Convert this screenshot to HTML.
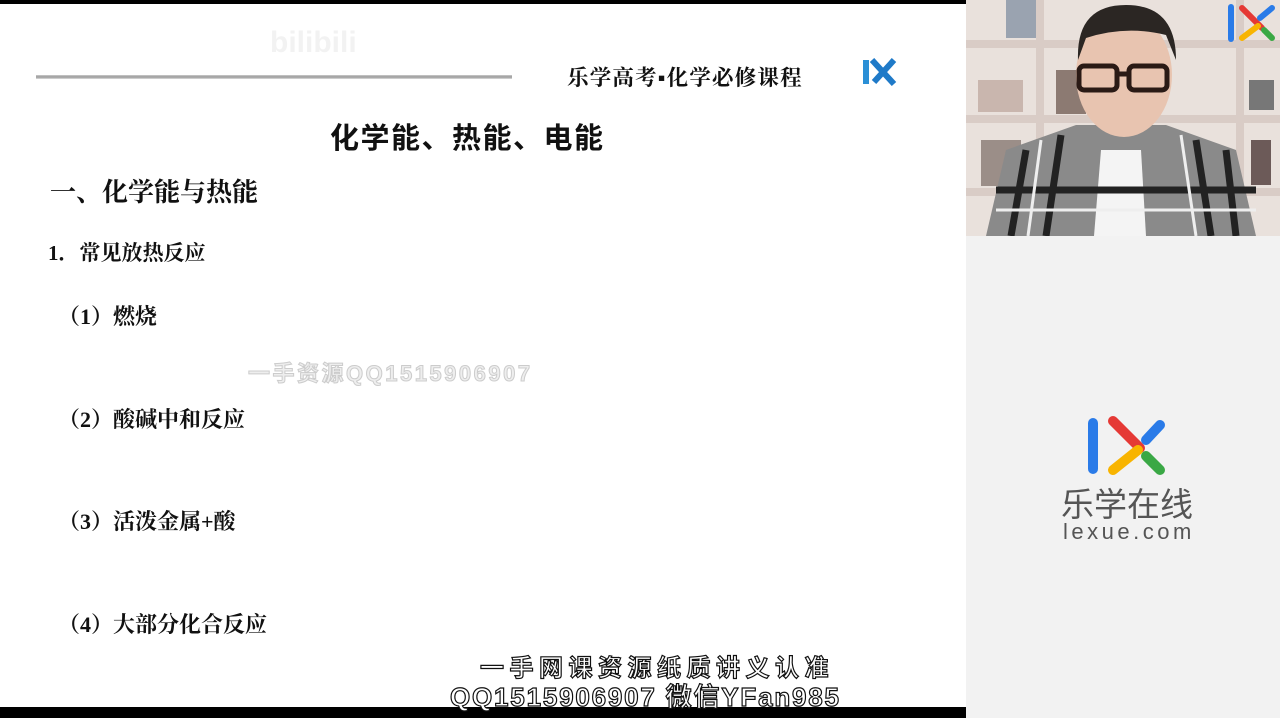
<!DOCTYPE html>
<html><head><meta charset="utf-8"><style>
*{margin:0;padding:0;box-sizing:border-box}
body{width:1280px;height:718px;overflow:hidden;background:#fff;position:relative;font-family:"Liberation Serif","Noto Serif CJK SC",serif;color:#111}
.a{position:absolute;white-space:nowrap;line-height:1}
.b{font-weight:bold}
</style></head><body>
<div class="a" style="left:0;top:0;width:966px;height:4px;background:#000"></div>
<div class="a" style="left:0;top:707px;width:966px;height:11px;background:#000"></div>
<div class="a" style="left:36px;top:75px;width:476px;height:4px;background:linear-gradient(#ccc,#999,#ddd)"></div>
<div class="a" style="left:270px;top:26px;font:bold 30px 'Liberation Sans',sans-serif;color:#f2f2f2">bilibili</div>
<div class="a b" style="left:567px;top:68px;font-size:21.5px;letter-spacing:1.2px">乐学高考▪化学必修课程</div>
<svg class="a" style="left:860px;top:58px" width="40" height="28" viewBox="0 0 40 28"><rect x="3" y="2" width="6" height="24" fill="#2a8fd6"/><path d="M12 2 L34 26 M34 2 L14 24" stroke="#1f7ac8" stroke-width="6"/></svg>
<div class="a b" style="left:330px;top:125px;font-family:'Liberation Sans','Noto Sans CJK SC',sans-serif;font-size:29px;letter-spacing:1.5px">化学能、热能、电能</div>
<div class="a b" style="left:50px;top:180px;font-size:26px">一、化学能与热能</div>
<div class="a b" style="left:48px;top:243px;font-size:21px">1．常见放热反应</div>
<div class="a b" style="left:58px;top:306px;font-size:22px">（1）燃烧</div>
<div class="a b" style="left:58px;top:409px;font-size:22px">（2）酸碱中和反应</div>
<div class="a b" style="left:58px;top:511px;font-size:22px">（3）活泼金属+酸</div>
<div class="a b" style="left:58px;top:614px;font-size:22px">（4）大部分化合反应</div>
<div class="a b" style="left:248px;top:363px;font-family:'Liberation Sans','Noto Sans CJK SC',sans-serif;font-size:22px;letter-spacing:2.5px;color:#eee;-webkit-text-stroke:1px #ccc">一手资源QQ1515906907</div>
<div class="a b" style="left:480px;top:657px;font-family:'Liberation Sans','Noto Sans CJK SC',sans-serif;font-size:24px;color:#fff;-webkit-text-stroke:1.2px #111;letter-spacing:5.5px">一手网课资源纸质讲义认准</div>
<div class="a b" style="left:450px;top:684px;font-family:'Liberation Sans','Noto Sans CJK SC',sans-serif;font-size:26px;color:#fff;-webkit-text-stroke:1.2px #111;letter-spacing:1.8px">QQ1515906907 微信YFan985</div>
<div class="a" style="left:966px;top:0;width:314px;height:718px;background:#f2f2f2"></div>
<svg class="a" style="left:966px;top:0" width="314" height="236" viewBox="0 0 314 236">
<rect width="314" height="236" fill="#e9e1dc"/>
<g fill="#d9ccc6"><rect x="0" y="40" width="314" height="8"/><rect x="0" y="115" width="314" height="8"/><rect x="0" y="188" width="314" height="8"/><rect x="70" y="0" width="8" height="236"/><rect x="270" y="0" width="8" height="236"/></g>
<rect x="12" y="80" width="45" height="32" fill="#c9b6ae"/><rect x="90" y="70" width="30" height="44" fill="#8c7a72"/><rect x="15" y="140" width="40" height="46" fill="#9b8e88"/><rect x="283" y="80" width="25" height="30" fill="#777"/><rect x="285" y="140" width="20" height="45" fill="#6c5a58"/>
<rect x="40" y="0" width="30" height="38" fill="#9aa3b0"/>
<path d="M20 236 L40 150 L110 125 L200 125 L270 150 L290 236 Z" fill="#8a8a8a"/>
<path d="M135 150 L175 150 L180 236 L128 236 Z" fill="#f4f4f4"/>
<g stroke="#222" stroke-width="7" fill="none"><path d="M60 150 L45 236 M95 135 L80 236 M230 140 L245 236 M260 150 L270 236 M30 190 L290 190"/></g>
<g stroke="#eee" stroke-width="3" fill="none"><path d="M75 140 L62 236 M215 135 L230 236 M30 210 L290 210"/></g>
<ellipse cx="158" cy="75" rx="48" ry="62" fill="#e8c4b0"/>
<path d="M112 60 Q110 5 160 5 Q210 5 210 60 L200 35 Q160 25 120 38 Z" fill="#2b2623"/>
<g fill="none" stroke="#2a1a15" stroke-width="5"><rect x="113" y="66" width="38" height="24" rx="5"/><rect x="163" y="66" width="38" height="24" rx="5"/><path d="M151 74 L163 74"/></g>
<rect x="262" y="4" width="6" height="38" rx="3" fill="#2a7be8"/><path d="M276 8 L296 28" stroke="#e53935" stroke-width="6" stroke-linecap="round"/><path d="M294 18 L306 8" stroke="#2a7be8" stroke-width="6" stroke-linecap="round"/><path d="M276 38 L292 26" stroke="#f8b400" stroke-width="6" stroke-linecap="round"/><path d="M298 30 L306 38" stroke="#3aa845" stroke-width="6" stroke-linecap="round"/>
</svg>
<svg class="a" style="left:1080px;top:410px" width="90" height="70" viewBox="0 0 90 70">
<rect x="8" y="8" width="10" height="56" rx="5" fill="#2a7be8"/>
<path d="M33 11 L60 38" stroke="#e53935" stroke-width="10" stroke-linecap="round"/>
<path d="M33 60 L58 40" stroke="#f8b400" stroke-width="10" stroke-linecap="round"/>
<path d="M66 30 L80 15" stroke="#2a7be8" stroke-width="10" stroke-linecap="round"/>
<path d="M66 46 L80 60" stroke="#3aa845" stroke-width="10" stroke-linecap="round"/>
</svg>
<div class="a" style="left:1061px;top:488px;font-family:'Liberation Sans','Noto Sans CJK SC',sans-serif;font-size:33px;color:#555">乐学在线</div>
<div class="a" style="left:1063px;top:521px;font-family:'Liberation Sans',sans-serif;font-size:22px;color:#555;letter-spacing:3.5px">lexue.com</div>
</body></html>
